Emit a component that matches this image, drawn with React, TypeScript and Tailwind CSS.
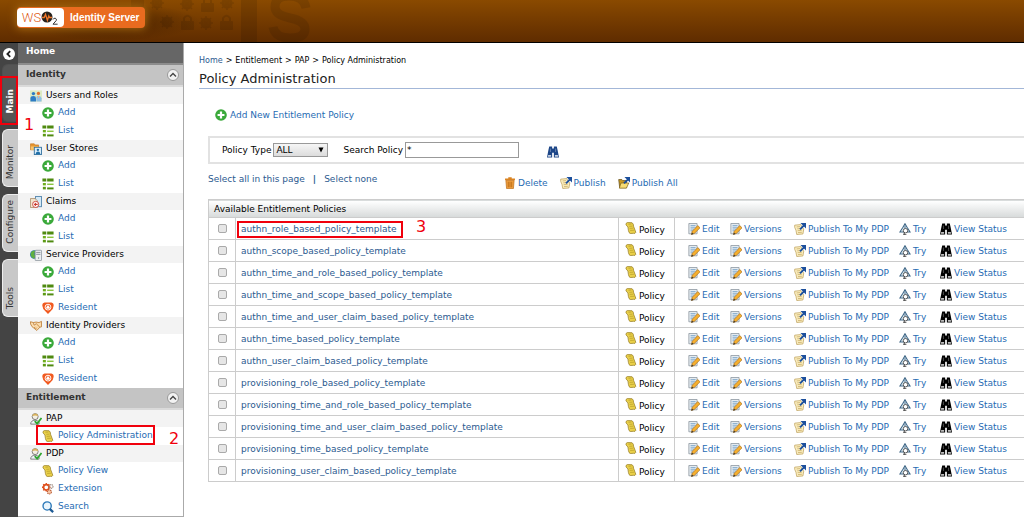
import React, { useState } from 'react';
import { clsx } from 'clsx';

type IconName =
  | 'add' | 'list' | 'users' | 'stores' | 'claims' | 'providers' | 'handshake' | 'resident'
  | 'person' | 'scroll' | 'extension' | 'search' | 'trash' | 'publish' | 'publishAll'
  | 'edit' | 'try' | 'binoculars';

const arrow = (
  <>
    <path d="M7 7.5 L12 2.500" stroke="#1c4f9c" strokeWidth="2.200" />
    <path d="M7.500 0 H14 V6.500 Z" fill="#1c4f9c" />
  </>
);

const drawings: Record<IconName, React.ReactNode> = {
  add: (
    <>
      <circle cx="7" cy="7" r="6.8" fill="#3aa93a" />
      <path d="M7 3 V11 M3 7 H11" stroke="#fff" strokeWidth="2.6" />
    </>
  ),
  list: (
    <>
      <path d="M0.5 0.5 H5 V4 H0.5 Z M6 0.5 H13.5 V4 H6 Z" fill="#4f8a10" />
      <path d="M1 5.8 H4.5 V8.6 H1 Z" fill="#6fae1c" />
      <path d="M6 6.5 H13.5 V8.2 H6 Z" fill="#8cc63e" />
      <path d="M1 10.3 H4.5 V13.3 H1 Z" fill="#5c9a14" />
      <path d="M6 11 H13.5 V13.3 H6 Z" fill="#4f8a10" />
    </>
  ),
  users: (
    <>
      <rect x="0" y="0.5" width="14" height="13" fill="#dcebc4" />
      <circle cx="4" cy="4.2" r="2" fill="#2d7cc4" />
      <circle cx="9.8" cy="4" r="1.9" fill="#e0702a" />
      <path d="M0.5 13.5 V9.5 Q0.5 7 4 7 Q7 7 7 9.5 V13.5 Z" fill="#2d7cc4" />
      <path d="M7.5 13.5 V8.5 Q7.8 6.8 10 6.8 Q13 7 13.4 9.5 V13.5 Z" fill="#8fc0e6" />
      <path d="M9 7 L10 10 L11 7 Z" fill="#f5b27a" />
    </>
  ),
  stores: (
    <>
      <path d="M0.5 1 H5 L6 2.2 H10 V8 H0.5 Z" fill="#e8962e" stroke="#c0701a" strokeWidth="0.7" />
      <path d="M1 4 H9.5 V8 H1 Z" fill="#f8c46a" />
      <rect x="5" y="5" width="8.5" height="8.5" fill="#d9ecf8" stroke="#2c6d9c" />
      <circle cx="9.2" cy="8" r="1.4" fill="#1f6ea8" />
      <path d="M6.5 13 Q6.8 9.8 9.2 9.8 Q11.8 9.8 12 13 Z" fill="#1f6ea8" />
    </>
  ),
  claims: (
    <>
      <rect x="6.5" y="0.5" width="7" height="12" fill="#d5e9f6" stroke="#4b7fa8" />
      <path d="M0.5 3 H6 L8.5 5.5 V13.5 H0.5 Z" fill="#f3e6cf" stroke="#9a7a50" strokeWidth="0.8" />
      <circle cx="6.6" cy="9.8" r="3.6" fill="#fff" stroke="#c9392c" />
      <path d="M4.2 9.8 L7 7.6 V9 H9 V10.6 H7 V12 Z" fill="#c9392c" />
    </>
  ),
  providers: (
    <>
      <circle cx="5" cy="6.5" r="5" fill="#2d76c0" />
      <path d="M1 4 Q4 1 6 2.2 L5 6 L7 9 L4 11.3 Q1 9 0.6 7 Z" fill="#5fb041" />
      <rect x="6" y="1.5" width="7.5" height="12" rx="0.8" fill="#eceff2" stroke="#7c8690" strokeWidth="0.8" />
      <path d="M7.2 4 H12.2 M7.2 6.2 H12.2" stroke="#7c8690" />
      <circle cx="10" cy="10.5" r="0.8" fill="#7c8690" />
    </>
  ),
  handshake: (
    <path
      d="M0.6 2 L4 3 L7 2.4 L10.5 3 L13.4 1.6 V8 L11.5 8.4 L8 12.2 L4 9 L2.4 7.8 L0.6 4.5 Z M4 3 L4.8 6 L7.4 4.4 L11.5 8.4 M4.8 9.4 L6.2 8 M6.2 10.6 L7.8 9"
      fill="#fbdcae"
      stroke="#b9752a"
      strokeWidth="0.9"
    />
  ),
  resident: (
    <>
      <path d="M3 0.5 H11 Q13.8 1 13.6 4.5 Q13.4 8.5 9.8 11 L7 14 L4.2 11 Q0.6 8.5 0.4 4.5 Q0.2 1 3 0.5 Z" fill="#f1591f" />
      <circle cx="7" cy="6" r="3.4" fill="none" stroke="#fff" strokeWidth="1.1" />
      <path d="M7 3.6 L9 6 V8 H5 V6 Z" fill="#fff" />
    </>
  ),
  person: (
    <>
      <circle cx="6" cy="4.2" r="3.5" fill="#f4efe2" stroke="#555" strokeWidth="0.8" />
      <path d="M2.6 3.8 Q3 0.6 6 0.6 Q9.2 0.6 9.4 3.8 Q6 2 2.6 3.8 Z" fill="#d8b25c" />
      <path d="M0.8 13 Q0.8 8.6 6 8.4 Q9.5 8.6 10.6 11 V13 Z" fill="#eef3f7" stroke="#555" strokeWidth="0.8" />
      <path d="M5.5 9.5 L8.3 12.4 L13.4 5.8" fill="none" stroke="#2fa52f" strokeWidth="2" />
    </>
  ),
  scroll: (
    <>
      <path d="M1.2 1.8 Q2.5 0 4.5 0.7 L8.3 0.9 Q10 2 10 5 L12.6 12 Q12 13.8 10 13.2 L6 13.5 Q4.6 13 4 10 Q4.2 5 1.2 3.4 Z" fill="#ead04a" stroke="#8c7218" strokeWidth="0.8" />
      <path d="M4 2.6 L7.5 2.4 M5 5 L8.8 4.8 M5.4 7.4 L9.6 7.2 M6 9.8 L10.5 9.6" stroke="#b39a26" strokeWidth="0.8" />
    </>
  ),
  extension: (
    <>
      <circle cx="5" cy="5" r="3.2" fill="none" stroke="#e0521f" strokeWidth="2" />
      <path d="M5 0 V2 M5 8 V10 M0 5 H2 M8 5 H10 M1.4 1.4 L3 3 M8.6 1.4 L7 3 M1.4 8.6 L3 7" stroke="#e0521f" strokeWidth="1.6" />
      <circle cx="10.6" cy="4" r="2.2" fill="none" stroke="#9b8a80" strokeWidth="1.4" strokeDasharray="1.4 0.6" />
      <circle cx="8.6" cy="10.4" r="2.4" fill="#f7c6a6" stroke="#b5532c" strokeWidth="1.2" strokeDasharray="1.5 0.7" />
    </>
  ),
  search: (
    <>
      <circle cx="6" cy="5.8" r="4.8" fill="#eaf5fc" stroke="#2b78b8" strokeWidth="1.6" />
      <path d="M9 9.2 L13 13" stroke="#1d5a94" strokeWidth="2.6" />
    </>
  ),
  trash: (
    <>
      <path d="M2.2 4 H11.8 L11 13.5 H3 Z" fill="#f0a040" stroke="#b96a14" strokeWidth="0.8" />
      <path d="M1.2 1.8 H12.8 V3.8 H1.2 Z M5 0.4 H9 V1.8 H5 Z" fill="#d98322" />
      <path d="M5 5.5 V12 M7 5.5 V12 M9 5.5 V12" stroke="#b96a14" />
    </>
  ),
  publish: (
    <>
      <path d="M0.8 2.5 L8 1.8 L8.8 4 L11.4 7 L10.4 12.8 L3.2 13.4 Q2.6 8 0.8 5 Z" fill="#fbeec0" stroke="#b89a50" strokeWidth="0.8" />
      <path d="M3 4.6 L7 4.2 M3.8 6.8 L7.4 6.5 M4.2 9 L9 8.6 M4.6 11.2 L9.2 10.8" stroke="#c2a258" strokeWidth="0.8" />
      {arrow}
    </>
  ),
  publishAll: (
    <>
      <path d="M0.8 3 H4.5 L5.6 4.2 H10 V12.4 H2 Z" fill="#c99824" stroke="#5a4614" strokeWidth="0.8" />
      <path d="M3.4 7 H12.6 L9.8 13 H1.6 Z" fill="#f8dc74" stroke="#7a5e18" strokeWidth="0.8" />
      {arrow}
    </>
  ),
  edit: (
    <>
      <path d="M1 0.6 H10.6 V12.6 H1 Z" fill="#e6ecf1" stroke="#8a949d" strokeWidth="0.9" />
      <path d="M3 3 H8.8 M3 5 H8.8 M3 7 H7 M3 9 H5.6" stroke="#6f9cc4" strokeWidth="0.9" />
      <path d="M11.4 3 L14 5.6 L7.6 12 L4 13.4 L5 9.6 Z" fill="#f7b02e" stroke="#a06a1c" strokeWidth="0.8" />
      <path d="M3.8 13.6 L4.6 11.2 L6.4 12.8 Z" fill="#333" />
    </>
  ),
  try: (
    <>
      <path d="M7 0.8 L9.4 5 L13 10.6 H1 L4.6 5 Z" fill="#dcebf4" stroke="#3c6484" strokeWidth="1.2" />
      <path d="M7 3 V6.500" stroke="#3c6484" />
      <circle cx="7.6" cy="9" r="2.6" fill="#fff" stroke="#444" />
      <path d="M6.4 11.2 L5.6 13.6 H8.6" stroke="#444" strokeWidth="1.2" />
    </>
  ),
  binoculars: (
    <>
      <path d="M2.6 0.6 H6 V3 H8 V0.6 H11.4 L12.4 5 L14 13.4 H8 V8 H6 V13.4 H0 L1.6 5 Z" fill="currentColor" />
      <path d="M1.4 10.4 H4.8 V12.6 H1 Z M9.2 10.4 H12.6 L13 12.6 H9.2 Z" fill="#fff" opacity="0.75" />
      <path d="M4 3 V7 M10 3 V7" stroke="#fff" strokeWidth="0.6" opacity="0.6" />
    </>
  ),
};

const Icon: React.FC<{ name: IconName; className?: string }> = ({ name, className }) => (
  <svg viewBox="0 0 14 14" aria-hidden="true" className={clsx('size-3 shrink-0', className)} fill="none">
    {drawings[name]}
  </svg>
);

interface MenuLink {
  label: string;
  icon: IconName;
  step?: string;
}

interface MenuGroup {
  label: string;
  icon: IconName;
  links: MenuLink[];
}

const add: MenuLink = { label: 'Add', icon: 'add' };
const list: MenuLink = { label: 'List', icon: 'list' };
const resident: MenuLink = { label: 'Resident', icon: 'resident' };

const sections: { title: string; groups: MenuGroup[] }[] = [
  {
    title: 'Identity',
    groups: [
      { label: 'Users and Roles', icon: 'users', links: [add, list] },
      { label: 'User Stores', icon: 'stores', links: [add, list] },
      { label: 'Claims', icon: 'claims', links: [add, list] },
      { label: 'Service Providers', icon: 'providers', links: [add, list, resident] },
      { label: 'Identity Providers', icon: 'handshake', links: [add, list, resident] },
    ],
  },
  {
    title: 'Entitlement',
    groups: [
      { label: 'PAP', icon: 'person', links: [{ label: 'Policy Administration', icon: 'scroll', step: '2' }] },
      {
        label: 'PDP',
        icon: 'person',
        links: [
          { label: 'Policy View', icon: 'scroll' },
          { label: 'Extension', icon: 'extension' },
          { label: 'Search', icon: 'search' },
        ],
      },
    ],
  },
];

const policies = [
  'authn_role_based_policy_template',
  'authn_scope_based_policy_template',
  'authn_time_and_role_based_policy_template',
  'authn_time_and_scope_based_policy_template',
  'authn_time_and_user_claim_based_policy_template',
  'authn_time_based_policy_template',
  'authn_user_claim_based_policy_template',
  'provisioning_role_based_policy_template',
  'provisioning_time_and_role_based_policy_template',
  'provisioning_time_and_user_claim_based_policy_template',
  'provisioning_time_based_policy_template',
  'provisioning_user_claim_based_policy_template',
];

const actions: { label: string; icon: IconName }[] = [
  { label: 'Edit', icon: 'edit' },
  { label: 'Versions', icon: 'edit' },
  { label: 'Publish To My PDP', icon: 'publish' },
  { label: 'Try', icon: 'try' },
  { label: 'View Status', icon: 'binoculars' },
];

const Header = () => (
  <header className="relative h-[43px] overflow-hidden border-b border-black bg-linear-to-b from-[#8a4a00] to-[#5f2c00] pt-[7px] pl-[17px]">
    {/* Faded lock and gear artwork behind the logo */}
    <svg aria-hidden="true" viewBox="0 0 340 42" className="absolute top-0 left-0 h-[42px] w-[340px]">
      <defs>
        <radialGradient id="glow">
          <stop offset="0" stopColor="#3a1a00" stopOpacity="0.7" />
          <stop offset="1" stopColor="#3a1a00" stopOpacity="0" />
        </radialGradient>
        <g id="lock">
          <rect x="0" y="6" width="13" height="9" rx="1" />
          <path d="M3 6 V3 Q6.500 -1.500 10 3 V6" fill="none" stroke="#000" strokeWidth="2" />
        </g>
        <g id="gear">
          <circle cx="7" cy="7" r="4" fill="none" stroke="#000" strokeWidth="3" />
          <path d="M7 0 V14 M0 7 H14 M2 2 L12 12 M12 2 L2 12" stroke="#000" strokeWidth="1.500" />
        </g>
      </defs>
      <ellipse cx="110" cy="22" rx="90" ry="19" fill="url(#glow)" />
      <g opacity="0.1">
        <use href="#lock" x="201" y="-3" />
        <use href="#lock" x="220" y="15" />
        <use href="#lock" x="181" y="15" />
        <use href="#gear" x="180" y="-3" />
        <use href="#gear" x="199" y="16" />
        <use href="#gear" x="160" y="15" />
        <use href="#gear" x="220" y="-4" />
        <use href="#gear" x="150" y="-4" />
        <use href="#lock" x="131" y="-8" />
      </g>
      <g opacity="0.1">
        <path d="M241 0 H257 V42 H241 Z" />
        <path d="M306 8 Q304 -4 289 -4 Q275 -4 275 7 Q275 15 290 18 Q305 21 305 29 Q305 38 290 38 Q275 38 273 27" fill="none" stroke="#000" strokeWidth="9" />
      </g>
    </svg>
    <a href="#" className="relative flex h-[21px] w-32 items-center rounded-[4px] bg-[#e96b1f] shadow-[0_0_8px_1px_#a86a10]">
      <span className="flex h-[19px] w-[47px] items-center justify-center rounded-[4px] bg-white">
        <span className="font-['Roboto','Liberation_Sans',sans-serif] text-[13px] leading-none font-light text-[#e0601a]">WS</span>
        <svg viewBox="0 0 18 15" aria-label="O2" className="h-[15px] w-[18px] shrink-0">
          <circle cx="6" cy="7" r="5.500" fill="#27211c" />
          <path d="M1 7.500 H3.200 L4.500 4.300 L6.400 10.300 L7.800 6 L8.600 7.500 H11" fill="none" stroke="#f0762a" strokeWidth="1.300" />
          <path d="M12 9.500 Q12.500 8 14.200 8.200 Q16 8.800 15.200 10.600 L12 14.200 H16.600" fill="none" stroke="#333" strokeWidth="1" />
        </svg>
      </span>
      <span className="pl-1.5 font-['Liberation_Sans',sans-serif] text-[10px] leading-none font-bold whitespace-nowrap text-white">
        Identity Server
      </span>
    </a>
  </header>
);

const SideTabs = () => (
  <div className="w-[18px] shrink-0 bg-[#444]">
    <div className="flex h-[21px] items-center justify-center">
      <button type="button" aria-label="Collapse menu" className="flex size-3 items-center justify-center rounded-full bg-white">
        <svg viewBox="0 0 10 10" className="size-2.5" fill="none" stroke="#222" strokeWidth="1.800">
          <path d="M6.200 2.200 L3.400 5 L6.200 7.800" />
        </svg>
      </button>
    </div>
    <div className="relative flex flex-col gap-[7px] pl-0.5">
      {['Main', 'Monitor', 'Configure', 'Tools'].map((tab, index) => (
        <button
          key={tab}
          type="button"
          className={clsx(
            'flex h-[58px] w-full items-end justify-center rounded-l-md border border-r-0 pb-[7px] text-[9px] leading-none',
            index === 0 ? 'border-[#505050] bg-[#555] font-bold text-white' : 'border-[#eee] bg-[#c8c8c8] text-[#333]',
          )}
        >
          <span className="rotate-180 [writing-mode:vertical-rl]">{tab}</span>
        </button>
      ))}
      <span className="absolute top-3 left-0 h-[49px] w-[18px] border-2 border-[#f0000c]" />
      <span className="absolute top-[53px] left-6 z-10 text-[16px] leading-none text-[#f0000c]">1</span>
    </div>
  </div>
);

const Sidebar = () => (
  <nav className="w-[166px] shrink-0 border-r border-b border-[#aaa] bg-white">
    <div className="flex h-[22px] items-start border-b-2 border-[#8c8c8c] bg-[#666] pt-0.5 pl-2 text-[9px] leading-[12px] font-bold text-white">
      Home
    </div>
    {sections.map((section) => (
      <section key={section.title}>
        <h2 className="flex h-[22px] items-center justify-between border-b-2 border-[#dadada] bg-[#c4c4c4] pr-1 pl-2 text-[9px] font-bold text-[#333]">
          {section.title}
          <button type="button" aria-label={`Toggle ${section.title}`} className="flex size-3 items-center justify-center rounded-full border border-[#999] bg-[#f2f2f2]">
            <svg viewBox="0 0 10 10" className="size-2.5 shrink-0" fill="none" stroke="#444" strokeWidth="1.400">
              <path d="M2 6.500 L5 3.500 L8 6.500" />
            </svg>
          </button>
        </h2>
        {section.groups.map((group) => (
          <div key={group.label}>
            <div className="flex h-[17px] items-center gap-1 bg-[#f3f3f3] pl-3 text-[9px] text-black">
              <Icon name={group.icon} />
              {group.label}
            </div>
            <ul className="pl-6">
              {group.links.map((link) => (
                <li key={link.label} className="relative flex h-[18px] items-center">
                  <a href="#" className="flex items-center gap-1 text-[9px] text-[#1f6bb3]">
                    <Icon name={link.icon} />
                    {link.label}
                  </a>
                  {link.step && (
                    <>
                      <span className="absolute -top-0.5 -left-1.5 h-5 w-[119px] border-2 border-[#f0000c]" />
                      <span className="absolute top-1 left-[127px] text-[16px] leading-none text-[#f0000c]">{link.step}</span>
                    </>
                  )}
                </li>
              ))}
            </ul>
          </div>
        ))}
      </section>
    ))}
  </nav>
);

const PolicyTable: React.FC<{ selected: string[]; onToggle: (policy: string) => void }> = ({ selected, onToggle }) => (
  <table className="mt-2.5 w-full table-fixed border-collapse text-left text-[9px] leading-[12px]">
    <colgroup>
      <col className="w-[27px]" />
      <col className="w-[383px]" />
      <col className="w-14" />
      <col />
    </colgroup>
    <thead>
      <tr className="h-[18px] border border-r-0 border-[#ccc] bg-linear-to-b from-white to-[#d8dbdb]">
        <th colSpan={4} className="pl-[5px] font-normal text-black">Available Entitlement Policies</th>
      </tr>
    </thead>
    <tbody>
      {policies.map((policy, index) => (
        <tr key={policy} className="h-[22px] border-b border-[#ccc]">
          <td className="border-x border-[#ccc] p-0">
            <input
              type="checkbox"
              aria-label={policy}
              checked={selected.includes(policy)}
              onChange={() => onToggle(policy)}
              className="mx-auto block size-[9px] appearance-none rounded-xs border border-[#aaa] bg-[#e6e6e6] checked:bg-[#1f6bb3]"
            />
          </td>
          <td className="p-0 pl-[5px]">
            <span className="relative inline-block">
              <a href="#" className="text-[#2b5a8f]">{policy}</a>
              {index === 0 && (
                <>
                  <span className="absolute -top-0.5 -right-1.5 -left-1 h-[17px] border-2 border-[#f0000c]" />
                  <span className="absolute -top-1 left-[175px] text-[16px] leading-none text-[#f0000c]">3</span>
                </>
              )}
            </span>
          </td>
          <td className="border-x border-[#ccc] p-0 pl-1.5">
            <span className="flex items-end gap-0.5 text-black">
              <Icon name="scroll" className="mb-0.5" />
              <span>Policy</span>
            </span>
          </td>
          <td className="p-0 pl-[13px]">
            <div className="grid grid-cols-[42px_64px_105px_41px_auto]">
              {actions.map((action) => (
                <a key={action.label} href="#" className="flex items-center gap-0.5 whitespace-nowrap text-[#1f6bb3]">
                  <Icon name={action.icon} className={action.icon === 'binoculars' ? 'text-black' : ''} />
                  {action.label}
                </a>
              ))}
            </div>
          </td>
        </tr>
      ))}
    </tbody>
  </table>
);

export default function App() {
  const [policyType, setPolicyType] = useState('ALL');
  const [search, setSearch] = useState('*');
  const [selected, setSelected] = useState<string[]>([]);

  const togglePolicy = (policy: string) => {
    setSelected((current) => (current.includes(policy) ? current.filter((item) => item !== policy) : [...current, policy]));
  };

  return (
    <div className="flex min-h-screen flex-col bg-white font-['DejaVu_Sans',sans-serif]">
      <Header />
      <div className="flex flex-1">
        <SideTabs />
        <Sidebar />
        <main className="min-w-0 flex-1 pl-[15px] text-[9px] leading-[12px] text-black">
          <div className="flex gap-[3px] pt-3 text-[8px]">
            <a href="#" className="text-[#2b5a8f]">Home</a>
            <span>&gt;</span>
            <span>Entitlement</span>
            <span>&gt;</span>
            <span>PAP</span>
            <span>&gt;</span>
            <span>Policy Administration</span>
          </div>
          <h1 className="mt-1 border-b border-[#a3b7d8] pb-px text-[13px] leading-4 text-[#222]">Policy Administration</h1>

          <div className="pt-5 pl-[9px]">
            <a href="#" className="ml-[7px] flex items-center gap-[3px] text-[#1f6bb3]">
              <Icon name="add" />
              Add New Entitlement Policy
            </a>

            <form className="mt-[15px] flex h-7 items-center border-2 border-r-0 border-[#e2e2e2] pl-3" onSubmit={(e) => e.preventDefault()}>
              <label htmlFor="policy-type">Policy Type</label>
              <span className="relative ml-0.5 flex">
                <select
                  id="policy-type"
                  value={policyType}
                  onChange={(e) => setPolicyType(e.target.value)}
                  className="h-3.5 w-[55px] appearance-none border border-[#999] bg-linear-to-b from-[#f6f6f6] to-[#dcdcdc] pl-0.5 text-[9px] leading-none"
                >
                  <option>ALL</option>
                </select>
                <svg viewBox="0 0 6 6" aria-hidden="true" className="pointer-events-none absolute top-1 right-1 size-1.5">
                  <path d="M0.500 0.500 H5.500 L3 5.500 Z" fill="#000" />
                </svg>
              </span>
              <label htmlFor="search-policy" className="ml-[15px]">Search Policy</label>
              <input
                id="search-policy"
                type="text"
                value={search}
                onChange={(e) => setSearch(e.target.value)}
                className="ml-0.5 h-4 w-[114px] border border-[#999] px-px text-[9px]"
              />
              <button type="submit" aria-label="Search" className="mt-1 ml-7">
                <Icon name="binoculars" className="text-[#1c4587]" />
              </button>
            </form>

            <div className="mt-[9px] flex items-start">
              <div className="flex w-[296px] gap-2 text-[#2b5a8f]">
                <button type="button" onClick={() => setSelected(policies)}>Select all in this page</button>
                <span className="font-bold">|</span>
                <button type="button" onClick={() => setSelected([])}>Select none</button>
              </div>
              <div className="mt-1 flex gap-3 text-[#1f6bb3]">
                <a href="#" className="flex items-center gap-0.5"><Icon name="trash" />Delete</a>
                <a href="#" className="flex items-center gap-0.5"><Icon name="publish" />Publish</a>
                <a href="#" className="flex items-center gap-0.5"><Icon name="publishAll" />Publish All</a>
              </div>
            </div>

            <PolicyTable selected={selected} onToggle={togglePolicy} />
          </div>
        </main>
      </div>
    </div>
  );
}
